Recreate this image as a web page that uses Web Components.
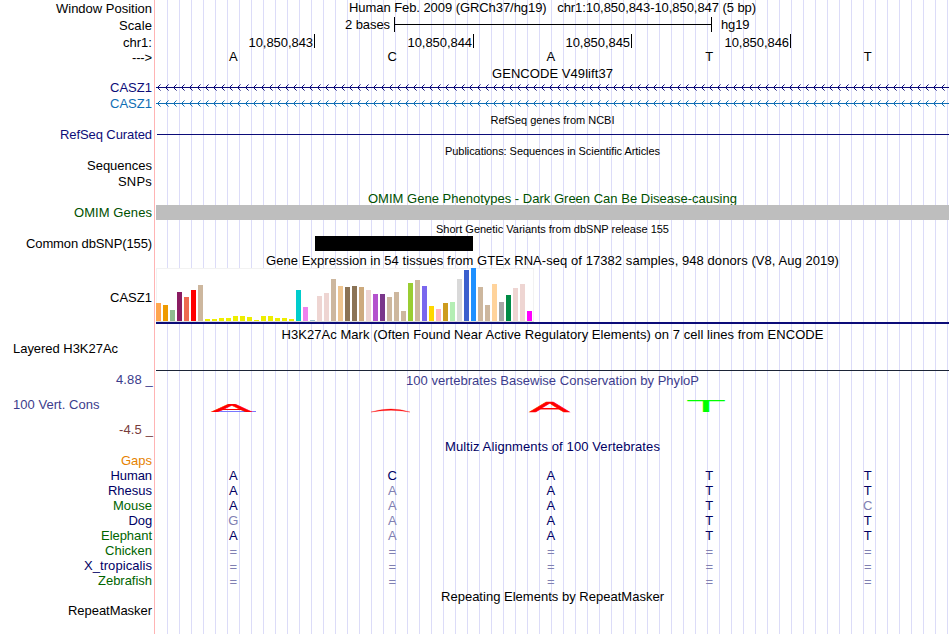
<!DOCTYPE html>
<html lang="en">
<head>
<meta charset="utf-8">
<title>hg19 chr1:10,850,843-10,850,847</title>
<style>
  body {
    margin: 0;
    background: #fff;
    color: #000;
    font: 13px/15px "Liberation Sans", Arial, sans-serif;
  }
</style>
</head>
<body>
<genome-view>
  <track-row h="16" top="1">
    <fit-text slot="label" w="96">Window Position</fit-text>
    <fit-text w="407">Human Feb. 2009 (GRCh37/hg19) &nbsp; chr1:10,850,843-10,850,847 (5 bp)</fit-text>
  </track-row>
  <track-row h="17" top="2">
    <fit-text slot="label" w="33">Scale</fit-text>
    <scale-bar></scale-bar>
  </track-row>
  <track-row h="16" top="2">
    <fit-text slot="label" w="29">chr1:</fit-text>
    <base-ruler ticks="10,850,843 10,850,844 10,850,845 10,850,846"></base-ruler>
  </track-row>
  <track-row h="17" top="1">
    <fit-text slot="label" w="20">---&gt;</fit-text>
    <base-row bases="ACATT"></base-row>
  </track-row>

  <track-row h="14"><fit-text w="121">GENCODE V49lift37</fit-text></track-row>
  <track-row h="16" color="#0c0c78">
    <fit-text slot="label" w="42">CASZ1</fit-text>
    <gene-line strand="-"></gene-line>
  </track-row>
  <track-row h="16" color="#0f6eb4">
    <fit-text slot="label" w="42">CASZ1</fit-text>
    <gene-line strand="-"></gene-line>
  </track-row>

  <track-row h="15" small><fit-text w="124">RefSeq genes from NCBI</fit-text></track-row>
  <track-row h="16" color="#0c0c78">
    <fit-text slot="label" w="92">RefSeq Curated</fit-text>
    <gene-line></gene-line>
  </track-row>

  <track-row h="15" small><fit-text w="215">Publications: Sequences in Scientific Articles</fit-text></track-row>
  <track-row h="16"><fit-text slot="label" w="65">Sequences</fit-text></track-row>
  <track-row h="17"><fit-text slot="label" w="34">SNPs</fit-text></track-row>

  <track-row h="14" color="#005000"><fit-text w="369">OMIM Gene Phenotypes - Dark Green Can Be Disease-causing</fit-text></track-row>
  <track-row h="15" color="#005000">
    <fit-text slot="label" w="78">OMIM Genes</fit-text>
    <feature-box start="0" size="793" fill="#bebebe"></feature-box>
  </track-row>

  <track-row h="16" small><fit-text w="233">Short Genetic Variants from dbSNP release 155</fit-text></track-row>
  <track-row h="17">
    <fit-text slot="label" w="126">Common dbSNP(155)</fit-text>
    <feature-box start="159" size="158" fill="#000"></feature-box>
  </track-row>

  <track-row h="15"><fit-text w="573">Gene Expression in 54 tissues from GTEx RNA-seq of 17382 samples, 948 donors (V8, Aug 2019)</fit-text></track-row>
  <track-row h="59" top="22">
    <fit-text slot="label" w="42">CASZ1</fit-text>
    <gtex-chart></gtex-chart>
  </track-row>

  <track-row h="14"><fit-text w="542">H3K27Ac Mark (Often Found Near Active Regulatory Elements) on 7 cell lines from ENCODE</fit-text></track-row>
  <track-row h="31" left>
    <fit-text slot="label" w="105">Layered H3K27Ac</fit-text>
    <signal-floor></signal-floor>
  </track-row>

  <track-row h="67">
    <score-axis slot="label"></score-axis>
    <phylo-plot></phylo-plot>
  </track-row>

  <track-row h="14" color="#000064"><fit-text w="215">Multiz Alignments of 100 Vertebrates</fit-text></track-row>
  <track-row h="15" color="#e68200"><fit-text slot="label" w="31">Gaps</fit-text></track-row>
  <track-row h="15" color="#000064">
    <fit-text slot="label" w="41.5">Human</fit-text><base-row bases="ACATT" aligned></base-row>
  </track-row>
  <track-row h="15" color="#000064">
    <fit-text slot="label" w="44">Rhesus</fit-text><base-row bases="AaATT" aligned></base-row>
  </track-row>
  <track-row h="15" color="#006400">
    <fit-text slot="label" w="39">Mouse</fit-text><base-row bases="AaATc" aligned></base-row>
  </track-row>
  <track-row h="15" color="#000064">
    <fit-text slot="label" w="23.5">Dog</fit-text><base-row bases="gaATT" aligned></base-row>
  </track-row>
  <track-row h="15" color="#006400">
    <fit-text slot="label" w="51">Elephant</fit-text><base-row bases="AaATT" aligned></base-row>
  </track-row>
  <track-row h="15" color="#006400">
    <fit-text slot="label" w="47">Chicken</fit-text><base-row bases="=====" aligned></base-row>
  </track-row>
  <track-row h="15" color="#000064">
    <fit-text slot="label" w="68">X_tropicalis</fit-text><base-row bases="=====" aligned></base-row>
  </track-row>
  <track-row h="15" color="#006400">
    <fit-text slot="label" w="54">Zebrafish</fit-text><base-row bases="=====" aligned></base-row>
  </track-row>
  <track-row h="15"><fit-text class="low" w="223">Repeating Elements by RepeatMasker</fit-text></track-row>
  <track-row h="31"><fit-text slot="label" w="84">RepeatMasker</fit-text></track-row>
</genome-view>

<script>
// attach an open root and fill it
function shadow(el, html) {
  if (!el.shadowRoot) el.attachShadow({ mode: "open" });
  el.shadowRoot.innerHTML = html;
  return el.shadowRoot;
}

// Text tracked out (or in) to a given width
class FitText extends HTMLElement {
  connectedCallback() {
    const root = shadow(this, `
      <style>
        :host { display: inline-block; white-space: nowrap; }
        span { display: inline-block; }
      </style>
      <span><slot></slot></span>
    `);
    const span = root.querySelector("span");
    const want = parseFloat(this.getAttribute("w"));
    const have = span.getBoundingClientRect().width;
    const chars = this.textContent.length;
    if (want && have) span.style.letterSpacing = (want - have) / chars + "px";
  }
}

class GenomeView extends HTMLElement {
  connectedCallback() {
    // guide lines every 12px, behind all tracks
    shadow(this, `
      <style>
        :host {
          display: flex;
          flex-direction: column;
          width: 949px;
          height: 634px;
          overflow: hidden;
          background:
            linear-gradient(#ffb4b4, #ffb4b4) 154px 0 / 1px 100% no-repeat,
            repeating-linear-gradient(to right, #dcdcf8 0 1px, transparent 1px 12px) 167px 0 / 782px 100% no-repeat;
        }
      </style>
      <slot></slot>
    `);
  }
}

class TrackRow extends HTMLElement {
  connectedCallback() {
    const h = this.getAttribute("h");
    const top = this.getAttribute("top") || 0;
    const small = this.hasAttribute("small");
    const left = this.hasAttribute("left");
    shadow(this, `
      <style>
        :host {
          display: grid;
          grid-template-columns: 156px 793px;
          flex: none;
          height: ${h}px;
          color: ${this.getAttribute("color") || "#000"};
        }
        .label {
          box-sizing: border-box;
          padding: ${top}px 4px 0 13px;
          text-align: ${left ? "left" : "right"};
          white-space: nowrap;
        }
        .data {
          text-align: center;
          ${small ? `font-size: 11px; line-height: 13px; padding-top: ${h - 13}px;` : ""}
        }
        ::slotted(.low) { padding-top: 1px; }
      </style>
      <div class="label"><slot name="label"></slot></div>
      <div class="data"><slot></slot></div>
    `);
  }
}

class ScaleBar extends HTMLElement {
  connectedCallback() {
    shadow(this, `
      <style>
        :host { display: flex; padding: 1px 0 0 188px; }
        .bar {
          width: 316px;
          height: 15px;
          margin: 0 9px 0 4px;
          border: solid #000;
          border-width: 0 1px;
          background: linear-gradient(#000, #000) 0 7px / 100% 1px no-repeat;
        }
        .name { width: 46px; text-align: right; }
      </style>
      <fit-text class="name" w="45">2 bases</fit-text>
      <div class="bar"></div>
      <fit-text w="28.5">hg19</fit-text>
    `);
  }
}

class BaseRuler extends HTMLElement {
  connectedCallback() {
    const ticks = this.getAttribute("ticks").split(" ");
    shadow(this, `
      <style>
        :host { display: grid; grid-template-columns: 159px 159px 158px 159px 158px; }
        div {
          height: 14px;
          margin-top: 1px;
          padding-right: 1px;
          border-right: 1px solid #000;
          text-align: right;
          line-height: 17px;
        }
      </style>
      ${ticks.map((t) => `<div><fit-text w="64.5">${t}</fit-text></div>`).join("")}
    `);
  }
}

// One letter per base; lower case marks a mismatch with the reference
class BaseRow extends HTMLElement {
  connectedCallback() {
    const cells = [...this.getAttribute("bases")].map((b) => {
      if (b === "=") return `<span class="dim gap">=</span>`;
      const up = b.toUpperCase();
      return b === up ? `<span>${up}</span>` : `<span class="dim">${up}</span>`;
    });
    shadow(this, `
      <style>
        :host { display: grid; grid-template-columns: 159px 159px 158px 159px 158px; }
        :host([aligned]) { color: #000064; }
        span { padding-right: 4.5px; text-align: center; }
        .dim { color: #8080b2; }
        .gap { padding-top: 1px; }
      </style>
      ${cells.join("")}
    `);
  }
}

class GeneLine extends HTMLElement {
  connectedCallback() {
    const arrows = this.getAttribute("strand") === "-";
    shadow(this, `
      <style>
        :host { display: block; height: 15px; }
        svg { display: block; }
      </style>
      <svg width="793" height="15" shape-rendering="crispEdges">
        <defs>
          <pattern id="chevron" width="8" height="15" patternUnits="userSpaceOnUse">
            <path d="M1 7h1v1h-1zM2 6h1v1h-1zM2 8h1v1h-1zM3 5h1v1h-1zM3 9h1v1h-1z" fill="currentColor"/>
            <path d="M4 4h1v1h-1zM4 10h1v1h-1z" fill="currentColor" opacity=".55"/>
          </pattern>
        </defs>
        <rect x="${arrows ? 0 : 1}" y="7" width="793" height="1" fill="currentColor"/>
        ${arrows ? `<rect width="793" height="15" fill="url(#chevron)"/>` : ""}
      </svg>
    `);
  }
}

class FeatureBox extends HTMLElement {
  connectedCallback() {
    shadow(this, `
      <style>
        :host {
          display: block;
          width: ${this.getAttribute("size")}px;
          height: 15px;
          margin-left: ${this.getAttribute("start")}px;
          background: ${this.getAttribute("fill")};
        }
      </style>
    `);
  }
}

// [height, colour] for each tissue
const TISSUES = [
  [18, "#ffa54f"], [16, "#ee9a00"], [11, "#8fbc8f"], [29, "#8b1c62"], [24, "#ee6a50"], [31, "#ff0000"],
  [36, "#cdb79e"], [2, "#eeee00"], [2, "#eeee00"], [3, "#eeee00"], [3, "#eeee00"], [5, "#eeee00"],
  [5, "#eeee00"], [4, "#eeee00"], [1, "#eeee00"], [5, "#eeee00"], [5, "#eeee00"], [3, "#eeee00"],
  [3, "#eeee00"], [2, "#eeee00"], [31, "#00cdcd"], [14, "#ee82ee"], [1, "#9ac0cd"], [25, "#eed5d2"],
  [28, "#eed5d2"], [42, "#cdb79e"], [35, "#eec591"], [34, "#8b7355"], [35, "#8b7355"], [34, "#cdaa7d"],
  [31, "#eed5d2"], [27, "#b452cd"], [27, "#7a378b"], [24, "#cdb79e"], [29, "#cdb79e"], [10, "#cdb79e"],
  [38, "#9acd32"], [41, "#cdb79e"], [35, "#7a67ee"], [15, "#ffd700"], [12, "#ffb6c1"], [18, "#cd9b1d"],
  [19, "#b4eeb4"], [42, "#d9d9d9"], [51, "#3a5fcd"], [53, "#1e90ff"], [34, "#cdb79e"], [16, "#cdb79e"],
  [37, "#ffd39b"], [19, "#a6a6a6"], [26, "#008b45"], [33, "#eed5d2"], [37, "#eed5d2"], [10, "#ff00ff"]
];

class GtexChart extends HTMLElement {
  connectedCallback() {
    shadow(this, `
      <style>
        :host { display: block; height: 56px; }
        .chart {
          box-sizing: border-box;
          display: flex;
          align-items: flex-end;
          gap: 2px;
          width: 378px;
          height: 54px;
          background:
            linear-gradient(#f2f2f2, #f2f2f2) 0 0 / 100% 1px no-repeat,
            linear-gradient(#f2f2f2, #f2f2f2) 0 0 / 1px 100% no-repeat,
            linear-gradient(#f2f2f2, #f2f2f2) 100% 0 / 1px 100% no-repeat,
            #fff;
          border-bottom: 1px solid #dcdcdc;
        }
        .chart i { width: 5px; flex: none; }
        .model { height: 2px; background: #0c0c78; }
      </style>
      <div class="chart">${TISSUES.map(([h, c]) => `<i style="height:${h}px;background:${c}"></i>`).join("")}</div>
      <div class="model"></div>
    `);
  }
}

class SignalFloor extends HTMLElement {
  connectedCallback() {
    shadow(this, `
      <style>
        :host { display: block; height: 29px; border-bottom: 1px solid #1c2436; }
      </style>
    `);
  }
}

class ScoreAxis extends HTMLElement {
  connectedCallback() {
    shadow(this, `
      <style>
        :host { display: grid; grid-template-rows: 25px 25px 17px; color: #3c3c8c; }
        .name { justify-self: start; }
        .edge { justify-self: end; margin-right: -1px; }
        .min { color: #783c3c; }
      </style>
      <fit-text class="edge" w="37">4.88 _</fit-text>
      <fit-text class="name" w="86.5">100 Vert. Cons</fit-text>
      <fit-text class="edge min" w="34">-4.5 _</fit-text>
    `);
  }
}

class PhyloPlot extends HTMLElement {
  connectedCallback() {
    shadow(this, `
      <style>
        :host { display: block; padding-top: 1px; color: #3c3c8c; }
        svg { display: block; font: 100px/1 "Liberation Sans", Arial, sans-serif; }
      </style>
      <fit-text w="293">100 vertebrates Basewise Conservation by PhyloP</fit-text>
      <svg width="793" height="28">
        <rect x="58" y="23" width="42" height="1" fill="#7878ff"/>
        <text transform="translate(55.5 23.6) scale(.61 .107)" fill="#f00" stroke="#f00" stroke-width="2">A</text>
        <path d="M215 24Q226 21 235 21T254 24Q244 22.3 235 22.3T215 24z" fill="#f00" stroke="#f00" stroke-width=".3"/>
        <text transform="translate(373.5 23.8) scale(.605 .152)" fill="#f00" stroke="#f00" stroke-width="2">A</text>
        <text transform="translate(529.7 24) scale(.665 .174)" fill="#0f0">T</text>
      </svg>
    `);
  }
}

customElements.define("genome-view", GenomeView);
customElements.define("track-row", TrackRow);
customElements.define("scale-bar", ScaleBar);
customElements.define("base-ruler", BaseRuler);
customElements.define("base-row", BaseRow);
customElements.define("gene-line", GeneLine);
customElements.define("feature-box", FeatureBox);
customElements.define("gtex-chart", GtexChart);
customElements.define("signal-floor", SignalFloor);
customElements.define("score-axis", ScoreAxis);
customElements.define("phylo-plot", PhyloPlot);
// last, so text is measured at the font size its row sets
customElements.define("fit-text", FitText);
</script>
</body>
</html>
